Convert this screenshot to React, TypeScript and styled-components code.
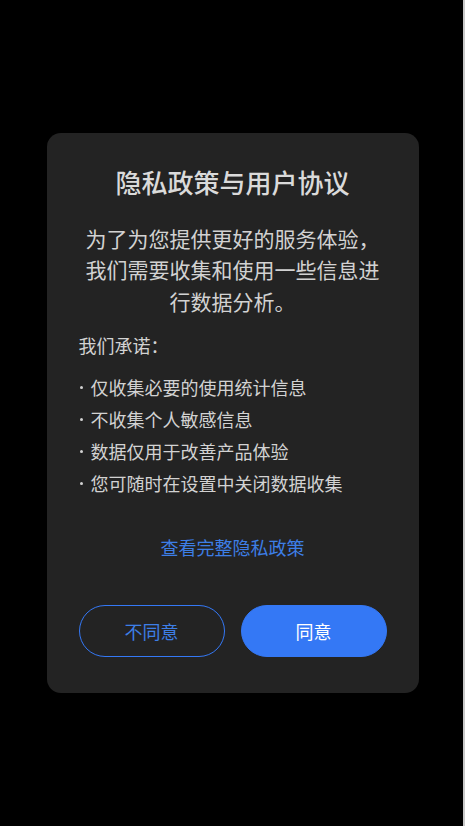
import React from "react";
import styled, { createGlobalStyle } from "styled-components";

const GlobalStyle = createGlobalStyle`
  html, body {
    margin: 0;
    padding: 0;
    height: 100%;
    background: #c9c9c9;
  }
  #root {
    height: 100%;
  }
`;

const Overlay = styled.div`
  position: fixed;
  top: 0;
  left: 0;
  bottom: 0;
  right: 2px;
  background: #000;
  display: flex;
  align-items: center;
  justify-content: center;
  font-family: "Noto Sans CJK SC", "Noto Sans", sans-serif;
`;

const Dialog = styled.div`
  width: 372px;
  margin-left: 2px;
  box-sizing: border-box;
  background: #232323;
  border-radius: 14px;
  padding: 30px 32px 36px;
  display: flex;
  flex-direction: column;
`;

const Title = styled.h2`
  margin: 0;
  font-size: 26px;
  line-height: 38px;
  font-weight: 500;
  color: #dadada;
  text-align: center;
`;

const Intro = styled.p`
  margin: 22px 0 0;
  font-size: 21px;
  line-height: 31.5px;
  color: #d2d2d2;
  text-align: center;
`;

const Promise = styled.div`
  margin-top: 15px;
  font-size: 18px;
  line-height: 27px;
  color: #d2d2d2;
`;

const List = styled.ul`
  list-style: none;
  margin: 12px 0 0;
  padding: 0;
`;

const Item = styled.li`
  display: flex;
  align-items: center;
  font-size: 18px;
  line-height: 32px;
  color: #d2d2d2;
`;

const Bullet = styled.span`
  flex: none;
  width: 3px;
  height: 3px;
  margin: 1px 8px 0 1px;
  border-radius: 50%;
  background: #d2d2d2;
`;

const PolicyLink = styled.a`
  margin-top: 35px;
  align-self: center;
  font-size: 18px;
  line-height: 27px;
  color: #3d7ee6;
  text-decoration: none;
`;

const Actions = styled.div`
  margin-top: 44px;
  display: flex;
  gap: 16px;
`;

const ActionButton = styled.button<{ $primary?: boolean }>`
  flex: 1;
  height: 52px;
  border-radius: 26px;
  box-sizing: border-box;
  font-family: inherit;
  font-size: 18px;
  border: 1.5px solid #3478f5;
  background: ${(p) => (p.$primary ? "#3478f5" : "transparent")};
  color: ${(p) => (p.$primary ? "#ffffff" : "#3d7ee6")};
  cursor: pointer;
`;

const promises = [
  "仅收集必要的使用统计信息",
  "不收集个人敏感信息",
  "数据仅用于改善产品体验",
  "您可随时在设置中关闭数据收集",
];

export default function App() {
  return (
    <>
      <GlobalStyle />
      <Overlay>
        <Dialog>
          <Title>隐私政策与用户协议</Title>
          <Intro>为了为您提供更好的服务体验，我们需要收集和使用一些信息进行数据分析。</Intro>
          <Promise>我们承诺：</Promise>
          <List>
            {promises.map((text) => (
              <Item key={text}>
                <Bullet />
                {text}
              </Item>
            ))}
          </List>
          <PolicyLink href="#">查看完整隐私政策</PolicyLink>
          <Actions>
            <ActionButton>不同意</ActionButton>
            <ActionButton $primary>同意</ActionButton>
          </Actions>
        </Dialog>
      </Overlay>
    </>
  );
}
